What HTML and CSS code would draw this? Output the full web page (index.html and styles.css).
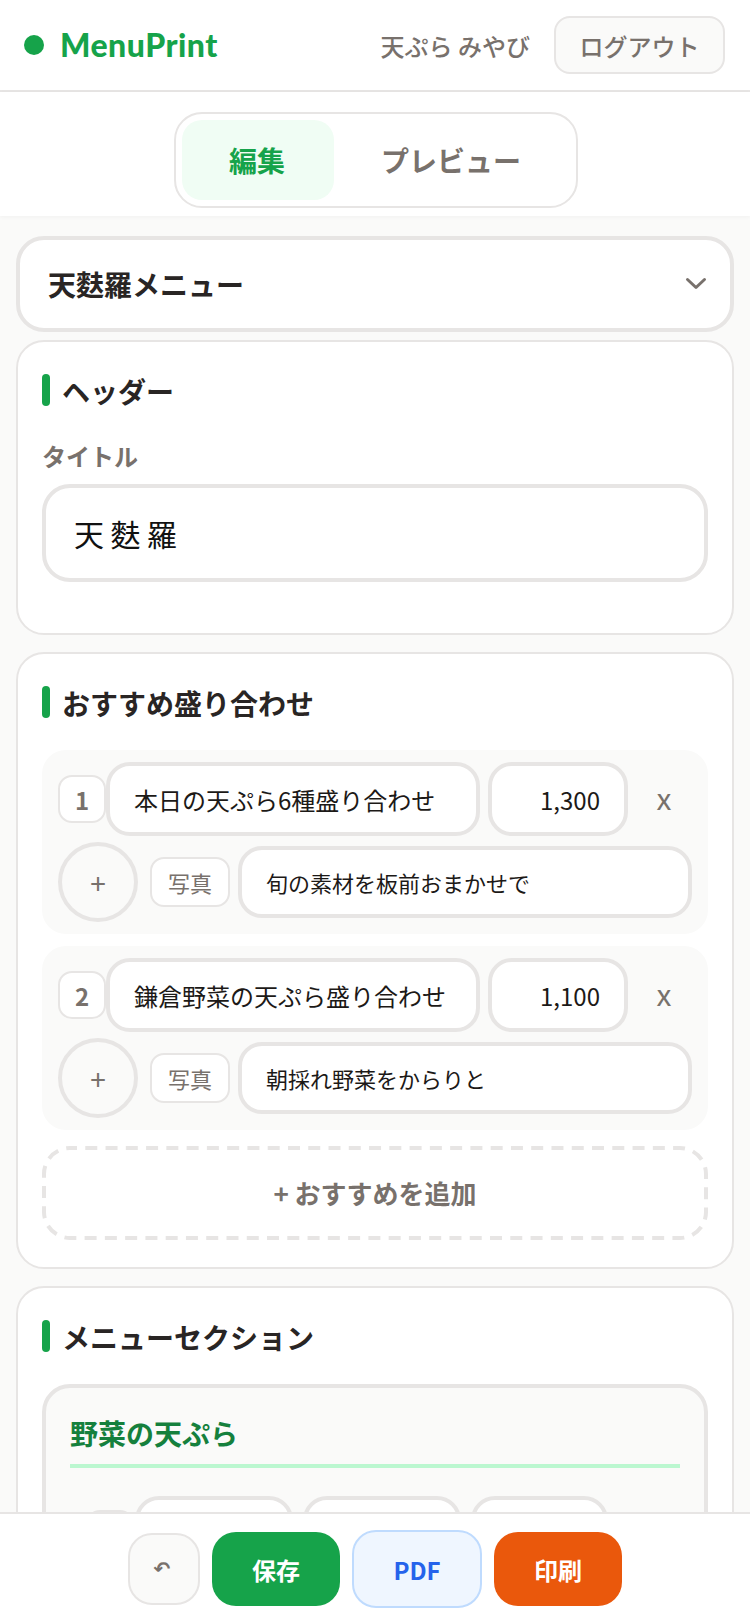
FILE: index.html
```html
<!DOCTYPE html>
<html lang="ja">
<head>
<meta charset="utf-8">
<title>MenuPrint</title>
<link rel="stylesheet" href="styles.css">
</head>
<body>
<div class="app">
  <header class="topbar">
    <div class="brand"><span class="brand-dot"></span><span class="brand-name">MenuPrint</span></div>
    <div class="account"><span class="shop-name">天ぷら みやび</span><button class="logout">ログアウト</button></div>
  </header>
  <nav class="tabbar">
    <div class="tabs">
      <button class="tab tab-active">編集</button>
      <button class="tab tab-plain">プレビュー</button>
    </div>
  </nav>
  <main class="content">
    <div class="select">
      <span>天麩羅メニュー</span>
      <svg class="chevron" width="24" height="24" viewBox="0 0 24 24"><path d="M3.5 7.5 L12 15.5 L20.5 7.5" fill="none" stroke="#78716c" stroke-width="3" stroke-linecap="round" stroke-linejoin="round"/></svg>
    </div>

    <section class="card card-header">
      <h2 class="card-title">ヘッダー</h2>
      <div class="label">タイトル</div>
      <div class="field field-title">天麩羅</div>
    </section>

    <section class="card card-rec">
      <h2 class="card-title">おすすめ盛り合わせ</h2>
      <div class="rec">
        <div class="rec-row">
          <span class="num">1</span>
          <div class="field field-name">本日の天ぷら6種盛り合わせ</div>
          <div class="field field-price">1,300</div>
          <span class="remove">x</span>
        </div>
        <div class="rec-row rec-row-b">
          <span class="add-photo">+</span>
          <span class="photo-btn">写真</span>
          <div class="field field-desc">旬の素材を板前おまかせで</div>
        </div>
      </div>
      <div class="rec">
        <div class="rec-row">
          <span class="num">2</span>
          <div class="field field-name">鎌倉野菜の天ぷら盛り合わせ</div>
          <div class="field field-price">1,100</div>
          <span class="remove">x</span>
        </div>
        <div class="rec-row rec-row-b">
          <span class="add-photo">+</span>
          <span class="photo-btn">写真</span>
          <div class="field field-desc">朝採れ野菜をからりと</div>
        </div>
      </div>
      <button class="add-rec">
        <svg class="add-rec-outline" width="666" height="94" viewBox="0 0 666 94"><rect x="2" y="2" width="662" height="90" rx="26" ry="26" fill="none" stroke="#e7e5e4" stroke-width="4" stroke-dasharray="12 8.27" stroke-dashoffset="5"/></svg>
        + おすすめを追加
      </button>
    </section>

    <section class="card card-sections">
      <h2 class="card-title">メニューセクション</h2>
      <div class="menu-section">
        <h3 class="section-name">野菜の天ぷら</h3>
        <div class="section-row">
          <span class="num num-c"></span>
          <div class="field field-a"></div>
          <div class="field field-a"></div>
          <div class="field field-b"></div>
        </div>
      </div>
    </section>
  </main>
  <footer class="actions">
    <button class="btn btn-undo">↶</button>
    <button class="btn btn-save">保存</button>
    <button class="btn btn-pdf">PDF</button>
    <button class="btn btn-print">印刷</button>
  </footer>
</div>
</body>
</html>
```

FILE: styles.css
```css
* { box-sizing: border-box; }
html, body { margin: 0; padding: 0; }
body {
  background: #fafaf9;
  color: #292524;
  font-family: "Noto Sans CJK JP", "Noto Sans", sans-serif;
}
button { font-family: inherit; margin: 0; padding: 0; }
.app { position: relative; width: 750px; height: 1624px; overflow: hidden; }

.topbar {
  height: 92px;
  background: #fff;
  border-bottom: 2px solid #e7e5e4;
  padding: 0 25px 0 24px;
  display: flex;
  align-items: center;
  justify-content: space-between;
}
.brand { display: flex; align-items: center; gap: 16px; }
.brand-dot { width: 20px; height: 20px; border-radius: 50%; background: #16a34a; }
.brand-name { font-family: "Lato", sans-serif; font-weight: 900; font-size: 32px; line-height: 40px; letter-spacing: 0.5px; color: #16a34a; }
.account { display: flex; align-items: center; gap: 24px; }
.shop-name { font-size: 24px; font-weight: 500; color: #78716c; }
.logout {
  width: 171px; height: 58px;
  background: #fafaf9;
  border: 2px solid #e7e5e4;
  border-radius: 16px;
  font-size: 24px;
  font-weight: 500;
  color: #78716c;
}

.tabbar {
  height: 124px;
  background: #fff;
  padding-top: 20px;
  display: flex;
  justify-content: center;
  align-items: flex-start;
  box-shadow: 0 1px 4px rgba(0,0,0,.04);
}
.tabs {
  width: 404px; height: 96px;
  margin-left: 2px;
  border: 2px solid #e7e5e4;
  border-radius: 28px;
  background: #fff;
  padding: 6px;
  display: flex;
}
.tab { border: 0; background: transparent; height: 80px; padding-right: 2px; font-size: 28px; font-weight: 700; border-radius: 20px; }
.tab-active { width: 152px; background: #f0fdf4; color: #16a34a; }
.tab-plain { flex: 1; color: #78716c; }

.content { padding: 20px 16px 0; display: flex; flex-direction: column; }
.select {
  height: 96px;
  background: #fff;
  border: 4px solid #e7e5e4;
  border-radius: 28px;
  padding: 0 22px 0 28px;
  margin-bottom: 8px;
  display: flex;
  align-items: center;
  justify-content: space-between;
  font-size: 28px;
  font-weight: 700;
}
.card {
  background: #fff;
  border: 2px solid #e7e5e4;
  border-radius: 28px;
  padding: 32px 24px 0;
  margin-bottom: 17px;
  flex: none;
}
.card-header { height: 295px; }
.card-rec { height: 617px; }
.card-sections { height: 400px; }
.card-title {
  margin: 0;
  height: 32px;
  display: flex;
  align-items: flex-start;
  font-size: 28px;
  font-weight: 700;
  line-height: 34px;
  color: #292524;
}
.card-title::before {
  content: "";
  width: 8px; height: 32px;
  border-radius: 4px;
  background: #16a34a;
  margin-right: 12px;
  flex: none;
}
.label { margin-top: 32px; font-size: 24px; line-height: 36px; font-weight: 700; color: #78716c; }
.field {
  background: #fff;
  border: 4px solid #e7e5e4;
  border-radius: 24px;
  display: flex;
  align-items: center;
  flex: none;
  white-space: nowrap;
  color: #1c1917;
}
.field-title {
  margin-top: 10px;
  height: 98px;
  border-radius: 28px;
  padding-left: 28px;
  font-size: 30px;
  letter-spacing: 6.5px;
  color: #111;
}
.rec {
  background: #fafaf9;
  border-radius: 24px;
  height: 184px;
  padding: 12px 16px 0;
  margin-bottom: 12px;
}
.card-title + .rec { margin-top: 32px; }
.rec-row { display: flex; align-items: center; }
.rec-row-b { margin-top: 6px; }
.num {
  width: 48px; height: 48px;
  flex: none;
  background: #fff;
  border: 2px solid #e7e5e4;
  border-radius: 14px;
  display: flex;
  align-items: center;
  justify-content: center;
  font-size: 24px;
  font-weight: 700;
  color: #78716c;
}
.field-name { width: 374px; height: 74px; padding-left: 24px; font-size: 24px; }
.field-price { width: 140px; height: 74px; margin-left: 8px; padding-right: 24px; justify-content: flex-end; font-size: 24px; }
.remove { width: 64px; padding: 0 0 4px 8px; text-align: center; font-size: 30px; color: #78716c; }
.add-photo {
  width: 80px; height: 80px;
  flex: none;
  border: 4px solid #e7e5e4;
  border-radius: 50%;
  display: flex;
  align-items: center;
  justify-content: center;
  font-size: 28px;
  color: #78716c;
}
.photo-btn {
  width: 80px; height: 50px;
  margin-left: 12px;
  flex: none;
  background: #fff;
  border: 2px solid #e7e5e4;
  border-radius: 14px;
  display: flex;
  align-items: center;
  justify-content: center;
  font-size: 22px;
  color: #78716c;
}
.field-desc { width: 454px; height: 72px; margin-left: 8px; padding-left: 24px; font-size: 22px; }
.add-rec {
  display: block;
  position: relative;
  width: 100%;
  height: 94px;
  margin-top: 16px;
  padding-bottom: 2px;
  background: transparent;
  border: 0;
  font-size: 26px;
  font-weight: 700;
  color: #78716c;
}
.add-rec-outline { position: absolute; left: 0; top: 0; }
.menu-section {
  margin-top: 32px;
  height: 300px;
  background: #fafaf9;
  border: 4px solid #e7e5e4;
  border-radius: 28px;
  padding: 24px 24px 0;
}
.section-name {
  margin: 0;
  height: 56px;
  border-bottom: 4px solid #bbf7d0;
  font-size: 28px;
  font-weight: 700;
  line-height: 42px;
  color: #15803d;
}
.section-row { display: flex; align-items: flex-start; margin-top: 28px; padding-left: 16px; }
.num-c { margin-top: 14px; }
.field-a { width: 158px; height: 74px; margin-right: 10px; }
.num-c + .field-a { margin-left: 1px; }
.field-b { width: 137px; height: 74px; }

.actions {
  position: absolute;
  left: 0; right: 0; bottom: 0;
  height: 112px;
  background: #fff;
  border-top: 2px solid #e7e5e4;
  display: flex;
  align-items: center;
  justify-content: center;
  gap: 12px;
}
.btn { border: 0; border-radius: 24px; font-size: 24px; font-weight: 700; color: #fff; }
.btn-undo { width: 72px; height: 72px; padding-right: 4px; background: #fafaf9; border: 2px solid #e7e5e4; color: #78716c; font-family: "DejaVu Sans", sans-serif; font-size: 20px; }
.btn-save { width: 128px; height: 74px; background: #16a34a; }
.btn-pdf { width: 130px; height: 78px; background: #eff6ff; border: 2px solid #bfdbfe; color: #2563eb; }
.btn-print { width: 128px; height: 74px; background: #ea580c; }
```
